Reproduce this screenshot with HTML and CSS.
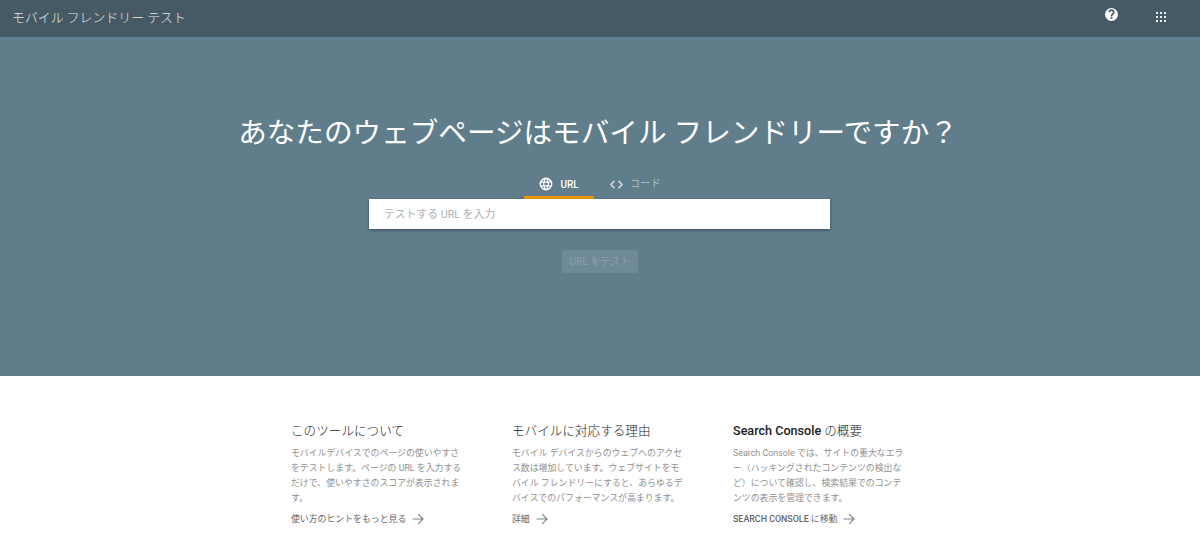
FILE: index.html
```html
<!doctype html>
<html lang="ja">
  <head>
    <meta charset="UTF-8" />
    <meta name="viewport" content="width=device-width, initial-scale=1.0" />
    <title>モバイル フレンドリー テスト</title>
    <link rel="stylesheet" href="styles.css">
  </head>
  <body>
    <header class="top-bar">
      <div class="app-title">モバイル フレンドリー テスト</div>
      <div class="top-icons">
        <svg class="help-icon" width="13" height="13" viewBox="0 0 24 24">
          <path fill="#fff" d="M12 0a12 12 0 1 0 0 24 12 12 0 0 0 0-24zm1.600 20.500h-3.200v-3.200h3.200v3.200zm2.800-9.200-1.300 1.300c-1 1-1.500 1.700-1.500 3.300h-3.200v-.7c0-1.400.6-2.700 1.500-3.700l1.800-1.800c.5-.4.8-1.100.8-1.800a2.500 2.500 0 0 0-5 0H6.300a5.700 5.700 0 0 1 11.400 0c0 1.100-.5 2.300-1.300 3.200z"/>
        </svg>
        <svg class="apps-icon" width="10" height="10" viewBox="0 0 10 10" fill="#e8ecee">
          <rect width="2" height="2"/><rect x="4" width="2" height="2"/><rect x="8" width="2" height="2"/>
          <rect y="4" width="2" height="2"/><rect x="4" y="4" width="2" height="2"/><rect x="8" y="4" width="2" height="2"/>
          <rect y="8" width="2" height="2"/><rect x="4" y="8" width="2" height="2"/><rect x="8" y="8" width="2" height="2"/>
        </svg>
      </div>
    </header>

    <section class="hero">
      <h1 class="hero-title">あなたのウェブページはモバイル フレンドリーですか？</h1>
      <div class="tabs">
        <div class="tab tab-active">
          <svg width="14" height="14" viewBox="0 0 24 24">
            <path fill="#fff" d="M12 1a11 11 0 1 0 0 22 11 11 0 0 0 0-22zm7.400 6.600h-3.100a16 16 0 0 0-1.500-3.900 8.900 8.900 0 0 1 4.600 3.900zM12 3.200c.9 1.300 1.600 2.800 2.100 4.400H9.900c.5-1.600 1.200-3.100 2.100-4.400zM3.500 14.200a9 9 0 0 1 0-4.400h3.700a18 18 0 0 0 0 4.400H3.500zm1.100 2.200h3.100c.4 1.400.9 2.700 1.500 3.900a8.900 8.900 0 0 1-4.600-3.900zm3.100-8.800H4.600a8.900 8.900 0 0 1 4.600-3.900c-.6 1.200-1.100 2.500-1.500 3.900zM12 20.800c-.9-1.300-1.600-2.800-2.100-4.400h4.200c-.5 1.600-1.200 3.100-2.100 4.400zm2.600-6.600H9.400a16 16 0 0 1 0-4.400h5.200a16 16 0 0 1 0 4.400zm.2 6.100c.6-1.200 1.100-2.500 1.500-3.900h3.100a8.900 8.900 0 0 1-4.600 3.900zm2-6.100a18 18 0 0 0 0-4.400h3.700a9 9 0 0 1 0 4.400h-3.700z"/>
          </svg>
          <span>URL</span>
        </div>
        <div class="tab tab-code">
          <svg width="13" height="9" viewBox="0 0 13 9">
            <path fill="none" stroke="#e4e9ec" stroke-width="1.300" d="M4.500 .8.900 4.500l3.600 3.700M8.500 .8l3.600 3.700-3.600 3.700"/>
          </svg>
          <span class="code-label">コード</span>
        </div>
      </div>
      <div class="url-box">テストする URL を入力</div>
      <button type="button" class="test-button">URL をテスト</button>
    </section>

    <section class="about">
      <div class="about-col">
        <h2>このツールについて</h2>
        <p>モバイルデバイスでのページの使いやすさをテストします。ページの URL を入力するだけで、使いやすさのスコアが表示されます。</p>
        <a class="more-link">使い方のヒントをもっと見る
          <svg width="12" height="12" viewBox="0 0 12 12"><path fill="none" stroke="#78868d" stroke-width="1.200" d="M.5 6h10M6.200 1.200 11 6l-4.800 4.800"/></svg>
        </a>
      </div>
      <div class="about-col">
        <h2>モバイルに対応する理由</h2>
        <p>モバイル デバイスからのウェブへのアクセス数は増加しています。ウェブサイトをモバイル フレンドリーにすると、あらゆるデバイスでのパフォーマンスが高まります。</p>
        <a class="more-link">詳細
          <svg width="12" height="12" viewBox="0 0 12 12"><path fill="none" stroke="#78868d" stroke-width="1.200" d="M.5 6h10M6.200 1.200 11 6l-4.800 4.800"/></svg>
        </a>
      </div>
      <div class="about-col">
        <h2><b>Search Console</b> の概要</h2>
        <p>Search Console では、サイトの重大なエラー（ハッキングされたコンテンツの検出など）について確認し、検索結果でのコンテンツの表示を管理できます。</p>
        <a class="more-link"><span><b>SEARCH CONSOLE</b> に移動</span>
          <svg width="12" height="12" viewBox="0 0 12 12"><path fill="none" stroke="#78868d" stroke-width="1.200" d="M.5 6h10M6.200 1.200 11 6l-4.800 4.800"/></svg>
        </a>
      </div>
    </section>
  </body>
</html>
```

FILE: styles.css
```css
html,
body {
  margin: 0;
  height: 538px;
  overflow: hidden;
  background: #fff;
  font-family: Roboto, "Noto Sans CJK JP", sans-serif;
}
.top-bar {
  height: 37px;
  background: #455a64;
  display: flex;
  justify-content: space-between;
  align-items: center;
  padding: 0 34px 0 12px;
}
.app-title {
  color: #e4e8ea;
  font-size: 12.900px;
  font-weight: 300;
  margin-top: -5px;
}
.top-icons {
  display: flex;
  align-items: center;
  gap: 38px;
  margin-top: -3px;
}
.help-icon {
  margin-bottom: 6px;
}
.hero {
  height: 339px;
  background: #607d8b;
  display: flex;
  flex-direction: column;
  align-items: center;
}
.hero-title {
  margin: 74px 4px 0 0;
  color: #fff;
  font-size: 28.600px;
  line-height: 44px;
  font-weight: 400;
}
.tabs {
  display: flex;
  margin-top: 13px;
  height: 31px;
}
.tab {
  width: 70px;
  display: flex;
  justify-content: center;
  align-items: center;
  gap: 7px;
  color: #b4c2c9;
  font-size: 10px;
  box-sizing: border-box;
  padding: 4px 0 3px;
}
.tab-code {
  width: 82px;
  padding-left: 1px;
  letter-spacing: 0.300px;
}
.code-label {
  margin-bottom: 3px;
}
.tab-active {
  color: #fff;
  font-weight: 500;
  border-bottom: 3px solid #f29900;
  padding-bottom: 0;
}
.url-box {
  width: 461px;
  height: 30px;
  margin-right: 1px;
  box-sizing: border-box;
  background: #fff;
  color: #b0b0b0;
  font-size: 10.800px;
  line-height: 31px;
  padding-left: 15px;
  box-shadow: 0 1px 3px rgba(0, 0, 0, 0.4);
}
.test-button {
  margin-top: 21px;
  width: 76px;
  height: 23px;
  padding: 0 0 2px;
  border: 0;
  border-radius: 2px;
  background: #6f8a97;
  color: #8ba1ab;
  font-family: inherit;
  font-size: 10px;
}
.about {
  display: flex;
  justify-content: center;
  gap: 49px;
  padding: 44px 4px 0 0;
}
.about-col {
  width: 172px;
}
.about-col h2 {
  margin: 0 0 5px;
  color: #222;
  font-size: 12.600px;
  line-height: 21px;
  font-weight: 300;
}
.about-col b {
  font-weight: 500;
}
.about-col p {
  margin: 0;
  color: #909090;
  font-size: 8.900px;
  line-height: 15px;
}
.more-link {
  display: flex;
  align-items: center;
  gap: 6px;
  margin-top: 5px;
  color: #666;
  font-size: 8.900px;
  line-height: 16px;
}
```
